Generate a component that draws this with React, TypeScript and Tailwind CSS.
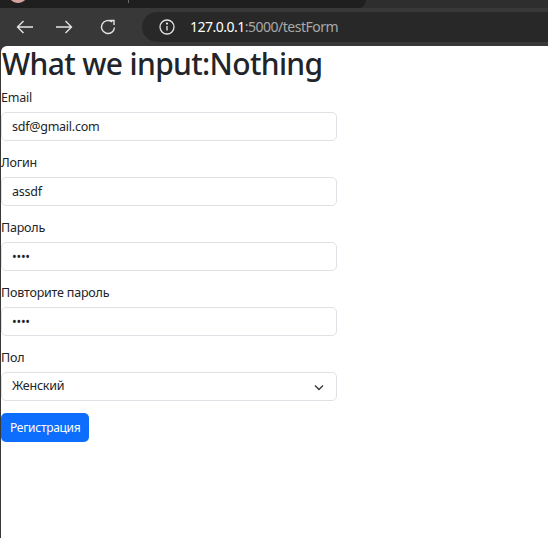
import React from 'react';

function Field({ label, value, type = 'text' }: { label: string; value: string; type?: string }) {
  return (
    <div className="mb-[12px]">
      <label className="block text-[12.5px] tracking-[-0.2px] leading-[19px] mb-[5px] text-[#212529]">{label}</label>
      <input
        type={type}
        value={value}
        readOnly
        className="block w-[336px] h-[29px] px-[10px] text-[12.5px] tracking-[-0.25px] text-[#212529] bg-white border border-[#dee2e6] rounded-[5px] outline-none"
      />
    </div>
  );
}

export default function App() {
  return (
    <div className="w-[548px] h-[538px] flex flex-col bg-[#383838] overflow-hidden font-['Noto_Sans',sans-serif]">
      {/* tab strip */}
      <div className="h-[8px] flex bg-[#2e2e2e]">
        <div className="relative w-[366px] bg-[#1f1f1f] rounded-br-[8px]">
          <div className="absolute left-[9px] top-[-14px] w-[18px] h-[17px] rounded-full bg-[#d9a0a0]" />
          <div className="absolute left-[128px] top-0 w-[1px] h-[3px] bg-[#6a6a6a]" />
        </div>
      </div>

      {/* toolbar */}
      <div className="h-[38px] flex items-center">
        <div className="w-[42px] flex justify-center pl-[8px]">
          <svg width="18" height="14" viewBox="0 0 18 14" fill="none" stroke="#e3e3e3" strokeWidth="1.4">
            <path d="M17 7H1.5M7.5 1L1.5 7l6 6" />
          </svg>
        </div>
        <div className="w-[44px] flex justify-center">
          <svg width="18" height="14" viewBox="0 0 18 14" fill="none" stroke="#e3e3e3" strokeWidth="1.4">
            <path d="M1 7h15.5M10.5 1l6 6-6 6" />
          </svg>
        </div>
        <div className="w-[44px] flex justify-center">
          <svg width="18" height="18" viewBox="0 0 18 18" fill="none" stroke="#e3e3e3" strokeWidth="1.4">
            <path d="M15.5 9.5A6.5 6.5 0 1 1 13.2 4" />
            <path d="M10.5 2.5h4.5V7" />
          </svg>
        </div>
        <div className="ml-[12px] flex-1 h-[30px] bg-[#282828] rounded-l-full flex items-center pl-[17px]">
          <svg width="16" height="16" viewBox="0 0 16 16" fill="none" stroke="#e3e3e3" strokeWidth="1.3">
            <circle cx="8" cy="8" r="7" />
            <path d="M8 7v4.5" />
            <circle cx="8" cy="4.6" r="0.5" fill="#e3e3e3" />
          </svg>
          <span className="ml-[15px] text-[14px] tracking-[-0.5px] leading-none">
            <span className="text-white">127.0.0.1</span>
            <span className="text-[#a8a8a8]">:5000/testForm</span>
          </span>
        </div>
      </div>

      {/* page */}
      <div className="flex-1 ml-[1px] bg-white rounded-tl-[6px] text-[#212529]">
        <h1 className="text-[30px] leading-[36px] font-medium tracking-[-0.65px] mb-[6px] pl-[1px]">What we input:Nothing</h1>
        <Field label="Email" value="sdf@gmail.com" />
        <Field label="Логин" value="assdf" />
        <Field label="Пароль" value="aaaa" type="password" />
        <Field label="Повторите пароль" value="aaaa" type="password" />
        <div className="mb-[12px]">
          <label className="block text-[12.5px] tracking-[-0.2px] leading-[19px] mb-[5px]">Пол</label>
          <div className="relative w-[336px] h-[29px] flex items-center px-[10px] text-[12.5px] tracking-[-0.25px] border border-[#dee2e6] rounded-[5px]">
            <span>Женский</span>
            <svg className="absolute right-[12px] top-[11px]" width="10" height="7" viewBox="0 0 10 7" fill="none" stroke="#343a40" strokeWidth="1.4">
              <path d="M1 1.5l4 4 4-4" />
            </svg>
          </div>
        </div>
        <button className="h-[29px] px-[9px] text-[12px] tracking-[-0.3px] text-white bg-[#0d6efd] rounded-[5px]">Регистрация</button>
      </div>
    </div>
  );
}
